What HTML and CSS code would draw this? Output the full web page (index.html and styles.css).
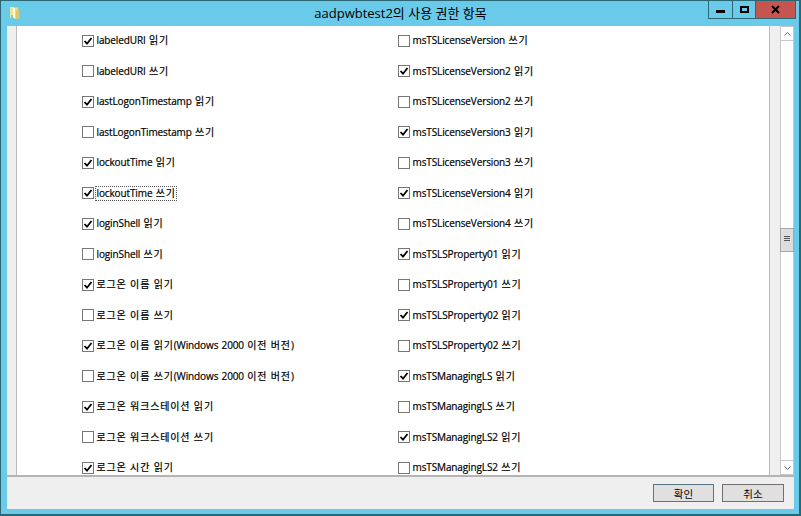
FILE: index.html
```html
<!DOCTYPE html>
<html lang="ko">
<head>
<meta charset="utf-8">
<title>aadpwbtest2의 사용 권한 항목</title>
<link rel="stylesheet" href="styles.css">
</head>
<body>
<div class="window">
  <header class="titlebar">
    <svg class="folder" width="12" height="14" viewBox="0 0 12 14"><path d="M1 1h4l1 10-5 1z" fill="#e8e6a0"/><path d="M5 2l4-1 1 10-4 2z" fill="#f0d878"/><path d="M4 1l2 1v11l-2-2z" fill="#fffbd8"/><path d="M7 5l3-1 1 8-4 1z" fill="#dfc768"/><path d="M2 9h2v3H2z" fill="#8fc8a8"/></svg>
    <h1 class="title">aadpwbtest2의 사용 권한 항목</h1>
    <div class="controls">
      <span class="control minimize"><svg width="24" height="18"><path d="M7 10h9v3H7z"/></svg></span>
      <span class="control maximize"><svg width="22" height="18"><path fill-rule="evenodd" d="M7 6h9v7H7zm2 2v3h5v-3z"/></svg></span>
      <span class="control close"><svg width="38" height="18"><path d="M16 6l7 7M23 6l-7 7" fill="none" stroke="#000" stroke-width="2"/></svg></span>
    </div>
  </header>
  <main class="body">
    <div class="gutter"></div>
    <div class="list" id="list"></div>
    <div class="gutter right"></div>
    <div class="scrollbar">
      <span class="arrow"><svg width="13" height="14"><path d="M3.500 8.500l3-3 3 3" fill="none" stroke="#666"/></svg></span>
      <span class="thumb"><svg width="12" height="22"><path d="M3 7.500h6M3 9.500h6M3 11.500h6" stroke="#555"/></svg></span>
      <span class="arrow down"><svg width="13" height="13"><path d="M3.500 5.500l3 3 3-3" fill="none" stroke="#666"/></svg></span>
    </div>
  </main>
  <footer class="footer">
    <button class="button primary">확인</button>
    <button class="button cancel">취소</button>
  </footer>
</div>
<script src="script.js"></script>
</body>
</html>
```
FILE: styles.css
```css
* { box-sizing: border-box; }
body { margin: 0; overflow: hidden; font-family: "Open Sans", "Noto Sans CJK KR", sans-serif; color: #000; }
.window { width: 801px; height: 516px; display: flex; flex-direction: column; background: #69caea; border: 1px solid #2b6673; border-right-width: 2px; border-bottom-width: 2px; padding: 0 5px 5px 6px; }
.titlebar { height: 25px; flex: none; display: grid; grid-template-columns: 88px 1fr 88px; align-items: start; }
.folder { margin: 5px 0 0 2px; }
.title { margin: 0; padding-top: 3px; font-size: 13px; line-height: 19px; font-weight: 400; text-align: center; white-space: nowrap; }
.controls { display: flex; height: 18px; margin-left: 2px; width: 88px; border: 1px solid #2b6673; border-top: 0; }
.control { display: block; height: 17px; margin-top: -1px; overflow: hidden; }
.control { margin-top: 0; }
.control svg { margin-top: -1px; }
.control svg, .arrow svg, .thumb svg { display: block; }
.minimize { width: 24px; border-right: 1px solid #2b6673; }
.maximize { width: 23px; border-right: 1px solid #2b6673; }
.close { flex: 1; background: #c4564f; }
.body { flex: 1; min-height: 0; display: flex; background: #fff; border-bottom: 2px solid #b4b4b4; }
.gutter { width: 10px; flex: none; background: #efefef; border-right: 1px solid #bbb; }
.gutter.right { width: 11px; border-right: 0; border-left: 1px solid #bbb; }
.list { flex: 1; display: grid; grid-template-columns: 316px 1fr; grid-auto-rows: 30.5px; padding-left: 65px; overflow: hidden; margin-top: -0.35px; }
.item { display: flex; align-items: center; font-size: 10px; line-height: 15px; white-space: nowrap; }
.box { width: 12px; height: 12px; flex: none; border: 1px solid #777; background: #fff; margin-right: 1px; }
.box svg { display: block; }
.label { padding: 0 2px 0 1.5px; letter-spacing: -0.12px; word-spacing: 0.8px; -webkit-text-stroke: 0.2px #000; }
.hangul { letter-spacing: 0.85px; word-spacing: 0; }
.focused .label { padding-right: 1px; outline: 1px dotted #555; outline-offset: -1px; }
.scrollbar { width: 14px; flex: none; display: flex; flex-direction: column; border: 1px solid #c8c8c8; background: #fff; }
.arrow { height: 14px; border-bottom: 1px solid #c8c8c8; }
.thumb { height: 24px; margin: 187px 0 auto -1px; width: 14px; background: #ddd; border: 1px solid #a6a6a6; }
.arrow.down { border-bottom: 0; border-top: 1px solid #c8c8c8; }
.footer { height: 32px; flex: none; background: #efefef; display: flex; justify-content: flex-end; gap: 8px; padding: 7px 10px 0 0; }
.button { width: 61px; height: 18px; padding: 0; border: 1px solid #707070; background: #e1dfdf; color: #000; font: 10.5px/15px "Noto Sans CJK KR", sans-serif; }
.button.cancel { width: 62px; }
.button.primary { border-color: #547885; }
```
FILE: script.js
```js
const left = ["labeledURI 읽기", "labeledURI 쓰기", "lastLogonTimestamp 읽기", "lastLogonTimestamp 쓰기", "lockoutTime 읽기", "lockoutTime 쓰기", "loginShell 읽기", "loginShell 쓰기", "로그온 이름 읽기", "로그온 이름 쓰기", "로그온 이름 읽기(Windows 2000 이전 버전)", "로그온 이름 쓰기(Windows 2000 이전 버전)", "로그온 워크스테이션 읽기", "로그온 워크스테이션 쓰기", "로그온 시간 읽기"];
const right = ["msTSLicenseVersion 쓰기", "msTSLicenseVersion2 읽기", "msTSLicenseVersion2 쓰기", "msTSLicenseVersion3 읽기", "msTSLicenseVersion3 쓰기", "msTSLicenseVersion4 읽기", "msTSLicenseVersion4 쓰기", "msTSLSProperty01 읽기", "msTSLSProperty01 쓰기", "msTSLSProperty02 읽기", "msTSLSProperty02 쓰기", "msTSManagingLS 읽기", "msTSManagingLS 쓰기", "msTSManagingLS2 읽기", "msTSManagingLS2 쓰기"];
const check = '<svg width="10" height="10"><path d="M1.500 5l2.500 2.700L8.500 2" fill="none" stroke="#000" stroke-width="1.800"/></svg>';
const item = (text) => {
  const focused = text === "lockoutTime 쓰기";
  const checked = focused || text.includes("읽기");
  const label = text.replace(/[가-힣]+( [가-힣]+)*/g, '<span class="hangul">$&</span>');
  return `<div class="item${focused ? " focused" : ""}"><span class="box">${checked ? check : ""}</span><span class="label">${label}</span></div>`;
};
document.getElementById("list").innerHTML = left.map((text, i) => item(text) + item(right[i])).join("");
```
